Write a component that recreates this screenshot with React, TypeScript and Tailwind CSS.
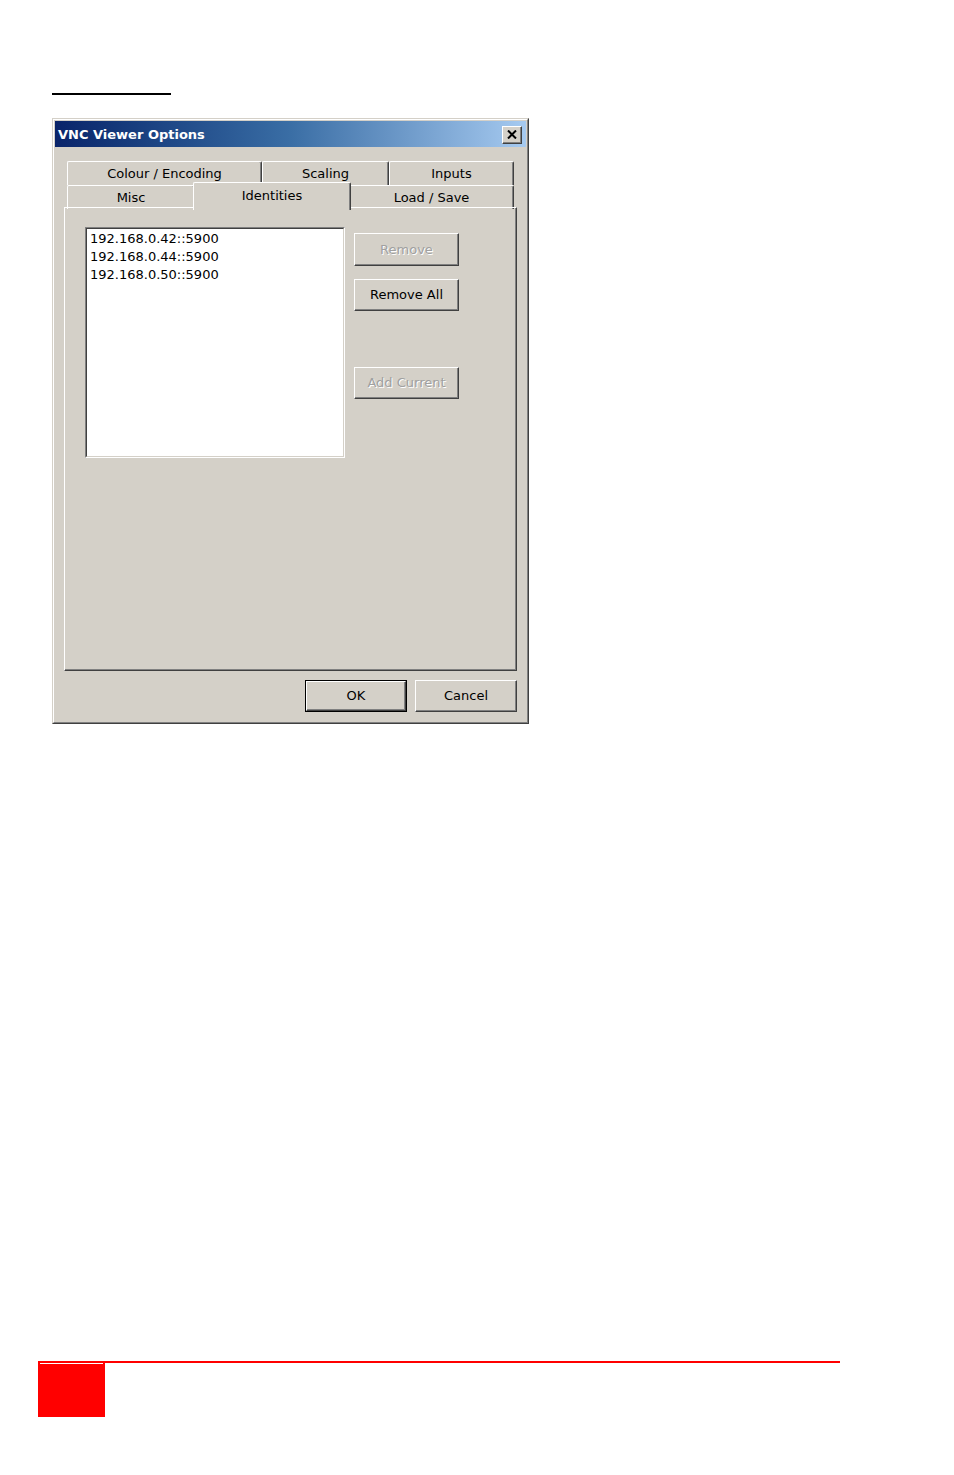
const ui = { fontFamily: '"DejaVu Sans", Verdana, sans-serif' };

function Tab({ label, width, selected = false }: { label: string; width: number; selected?: boolean }) {
  if (selected) {
    return (
      <div
        className="relative z-10 -mx-[2px] -mt-[3px] flex h-[28px] items-start justify-center rounded-t-[2px] border-l border-t border-r border-l-white border-t-white border-r-[#404040] bg-[#d4d0c8] pt-[3px] text-[13px] text-black shadow-[inset_-1px_0_0_#808080]"
        style={{ width: width + 4 }}
      >
        {label}
      </div>
    );
  }
  return (
    <div
      className="flex h-[24px] items-center justify-center rounded-t-[2px] border-l border-t border-r border-l-white border-t-white border-r-[#404040] bg-[#d4d0c8] text-[13px] text-black shadow-[inset_-1px_0_0_#808080]"
      style={{ width }}
    >
      {label}
    </div>
  );
}

function Button({
  children,
  disabled = false,
  isDefault = false,
  className = "",
}: {
  children: React.ReactNode;
  disabled?: boolean;
  isDefault?: boolean;
  className?: string;
}) {
  return (
    <div className={`${isDefault ? "border border-black" : ""} bg-[#d4d0c8] ${className}`}>
      <div className="flex h-full w-full items-center justify-center border border-t-white border-l-white border-r-[#404040] border-b-[#404040] shadow-[inset_-1px_-1px_0_#808080]">
        <span
          className={
            disabled
              ? "text-[13px] text-[#a0a0a0] [text-shadow:1px_1px_0_#ffffff]"
              : "text-[13px] text-black"
          }
        >
          {children}
        </span>
      </div>
    </div>
  );
}

export default function App() {
  const hosts = ["192.168.0.42::5900", "192.168.0.44::5900", "192.168.0.50::5900"];

  return (
    <div className="flex h-[1475px] w-[954px] flex-col bg-white" style={ui}>
      <div className="ml-[52px] mt-[93px] h-[2px] w-[119px] bg-black" />

      {/* dialog */}
      <div className="ml-[52px] mt-[23px] h-[606px] w-[477px] border border-t-[#d4d0c8] border-l-[#d4d0c8] border-r-[#404040] border-b-[#404040] bg-[#d4d0c8]">
        <div className="flex h-full flex-col border border-t-white border-l-white border-r-[#808080] border-b-[#808080] p-px">
          {/* title bar */}
          <div className="flex h-[26px] items-center justify-between bg-gradient-to-r from-[#0a246a] via-[#3a6ea5] to-[#a6caf0] pl-[3px] pr-[4px] pt-px">
            <span className="text-[13px] font-bold text-white">VNC Viewer Options</span>
            <div className="flex h-[18px] w-[20px] items-center justify-center border border-t-white border-l-white border-r-[#404040] border-b-[#404040] bg-[#d4d0c8] shadow-[inset_-1px_-1px_0_#808080]">
              <svg width="10" height="9" viewBox="0 0 10 9">
                <path d="M1 0.5 L9 8.5 M9 0.5 L1 8.5" stroke="#000" strokeWidth="2" />
              </svg>
            </div>
          </div>

          <div className="flex flex-1 flex-col px-[9px] pb-[8px]">
            {/* tabs */}
            <div className="mt-[14px] flex h-[47px] flex-col pl-[3px]">
              <div className="flex">
                <Tab label="Colour / Encoding" width={195} />
                <Tab label="Scaling" width={127} />
                <Tab label="Inputs" width={125} />
              </div>
              <div className="flex">
                <Tab label="Misc" width={128} />
                <Tab label="Identities" width={154} selected />
                <Tab label="Load / Save" width={165} />
              </div>
            </div>

            {/* panel */}
            <div className="-mt-px flex h-[464px] border border-t-white border-l-white border-r-[#404040] border-b-[#404040] pl-[20px] pt-[19px] shadow-[inset_-1px_-1px_0_#808080]">
              <div className="h-[231px] w-[260px] border border-t-[#808080] border-l-[#808080] border-r-white border-b-white">
                <div className="h-full border border-t-[#404040] border-l-[#404040] border-r-[#d4d0c8] border-b-[#d4d0c8] bg-white pl-[3px] pt-px">
                  {hosts.map((h) => (
                    <div key={h} className="h-[18px] text-[13px] leading-[18px] text-black">
                      {h}
                    </div>
                  ))}
                </div>
              </div>
              <div className="ml-[9px] flex flex-col pt-[6px]">
                <Button disabled className="h-[33px] w-[105px]">
                  Remove
                </Button>
                <Button className="mt-[13px] h-[32px] w-[105px]">Remove All</Button>
                <Button disabled className="mt-[56px] h-[32px] w-[105px]">
                  Add Current
                </Button>
              </div>
            </div>

            {/* footer buttons */}
            <div className="mt-[9px] flex justify-end gap-[8px]">
              <Button isDefault className="h-[32px] w-[102px]">
                OK
              </Button>
              <Button className="h-[32px] w-[102px]">Cancel</Button>
            </div>
          </div>
        </div>
      </div>

      {/* page footer */}
      <div className="ml-[38px] mt-[637px] h-[2px] w-[802px] bg-[#ff0000]" />
      <div className="ml-[38px] h-[54px] w-[67px] bg-[#ff0000] px-[2px]">
        <div className="h-px bg-white" />
      </div>
    </div>
  );
}
